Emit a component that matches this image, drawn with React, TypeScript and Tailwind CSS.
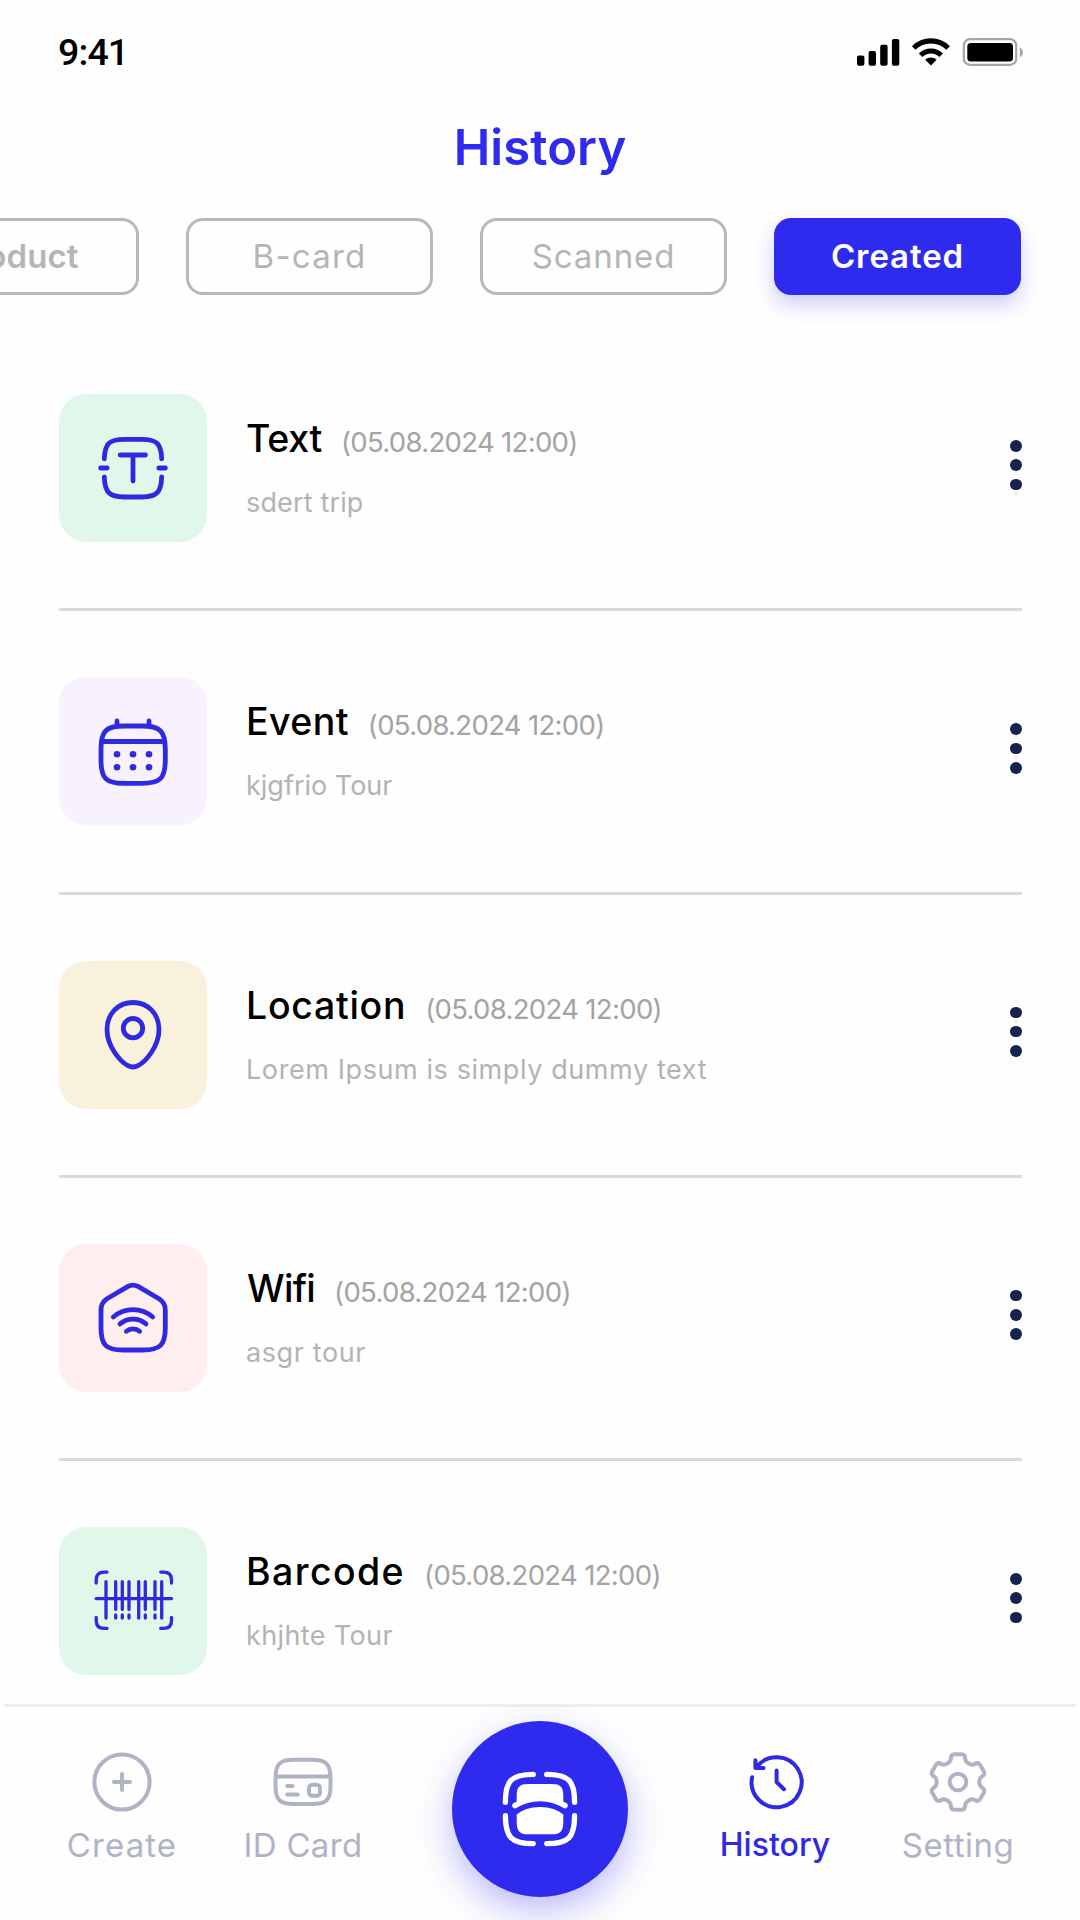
import type { ReactNode } from "react";

type HistoryEntry = {
  title: string;
  tracking: string;
  indent: string;
  note: string;
  noteTracking: string;
  tile: string;
  icon: ReactNode;
};

const DATE = "(05.08.2024 12:00)";

function TileIcon({ children, stroke = 4.8 }: { children: ReactNode; stroke?: number }) {
  return (
    <svg
      viewBox="0 0 80 80"
      className="size-20 overflow-visible text-[#3029E2]"
      fill="none"
      stroke="currentColor"
      strokeWidth={stroke}
      strokeLinecap="round"
      strokeLinejoin="round"
    >
      {children}
    </svg>
  );
}

const TextIcon = (
  <TileIcon>
    <path d="M11.3 30.8C11.8 15.5 16.5 11.3 31 11.3H49C63.5 11.3 68.2 15.5 68.7 30.8" />
    <path d="M11.3 48.9C11.8 64.5 16.5 69 31 69H49C63.5 69 68.2 64.5 68.7 48.9" />
    <path d="M7.6 40H14.2M65.8 40H72.4M27.2 27H52.5M40 27V53" />
  </TileIcon>
);

const EventIcon = (
  <TileIcon>
    <path d="M8 38C8 20 13 15 31 15H49C67 15 72.3 20 72.3 38V49C72.3 67.5 67 72.4 49 72.4H31C13 72.4 8 67.5 8 49Z" />
    <path d="M9 30.5H71M24 10V15M56 10V15" />
    <g fill="currentColor" stroke="none">
      {[43.3, 56.3].map((y) => [24, 40, 56].map((x) => <circle key={`${x}-${y}`} cx={x} cy={y} r="3.3" />))}
    </g>
  </TileIcon>
);

const LocationIcon = (
  <TileIcon>
    <path d="M40 7.5C25 7.5 14 19 14 34.5C14 51 27 66.5 35 70.7C38.5 72.5 41.5 72.5 45 70.7C53 66.5 66 51 66 34.5C66 19 55 7.5 40 7.5Z" />
    <circle cx="40" cy="33.2" r="9.7" />
  </TileIcon>
);

const WifiIcon = (
  <TileIcon>
    <path d="M35 8.4C38.5 6.6 41.5 6.6 45 8.4L66 20.7C70.5 23.5 72.3 26.5 72.3 32V50C72.3 67 67 72 50 72H30C13 72 8 67 8 50V32C8 26.5 9.5 23.5 14 20.7Z" />
    <path d="M20.3 39A30 30 0 0 1 59.7 39M27 45.9A20 20 0 0 1 53 45.9M33.4 53.3A10 10 0 0 1 46.6 53.3" />
  </TileIcon>
);

const BarcodeIcon = (
  <TileIcon stroke={3.3}>
    <path d="M3.2 22V19C3.2 14 6 11.1 11 11.1H14M67.7 11.1H70.7C75.7 11.1 78.5 14 78.5 19V22M3.2 56.5V59.5C3.2 64.5 6 67.4 11 67.4H14M67.7 67.4H70.7C75.7 67.4 78.5 64.5 78.5 59.5V56.5" />
    <path d="M3.2 37.6H78.5" />
    <path d="M13 20.7V57M45.7 20.7V57M68.7 20.7V57" />
    <path d="M22.7 20.7V48.4M29.3 20.7V48.4M36 20.7V48.4M52.3 20.7V48.4M62 20.7V48.4" />
    <path d="M22.7 54V57M29.3 54V57M36 54V57M52.3 54V57M62 54V57" />
  </TileIcon>
);

const entries: HistoryEntry[] = [
  { title: "Text", tracking: "tracking-[-0.3px]", indent: "", note: "sdert trip", noteTracking: "tracking-[0.15px]", tile: "bg-[#E1F7EA]", icon: TextIcon },
  { title: "Event", tracking: "tracking-[0.4px]", indent: "", note: "kjgfrio Tour", noteTracking: "tracking-[0px]", tile: "bg-[#F7F2FE]", icon: EventIcon },
  { title: "Location", tracking: "tracking-[0.7px]", indent: "", note: "Lorem Ipsum is simply dummy text", noteTracking: "tracking-[0.59px]", tile: "bg-[#F8F2DC]", icon: LocationIcon },
  { title: "Wifi", tracking: "tracking-[-0.7px]", indent: "ml-px", note: "asgr tour", noteTracking: "tracking-[0.6px]", tile: "bg-[#FEEEEE]", icon: WifiIcon },
  { title: "Barcode", tracking: "tracking-[1.4px]", indent: "", note: "khjhte Tour", noteTracking: "tracking-[0.38px]", tile: "bg-[#E1F7EA]", icon: BarcodeIcon },
];

function StatusBar() {
  return (
    <header className="flex h-[104px] shrink-0 items-center justify-between pr-[56px] pl-[58px]">
      <span className="font-[Roboto] text-[37.5px] font-medium tracking-[-0.9px] text-black">9:41</span>
      <svg viewBox="857 38 167 28" className="h-[28px] w-[167px]" fill="none">
        <g fill="#000">
          <rect x="857" y="55.5" width="7.4" height="10.2" rx="2" />
          <rect x="868.6" y="51" width="7.4" height="14.7" rx="2" />
          <rect x="880.2" y="44.8" width="7.4" height="20.9" rx="2" />
          <rect x="891.9" y="39" width="7.4" height="26.7" rx="2" />
          <path d="M930.9 65.5L925.2 59.8C928.3 56.6 933.5 56.6 936.6 59.8Z" />
          <rect x="967.3" y="43" width="45.7" height="18.6" rx="3.6" />
        </g>
        <path d="M913.7 48C923.3 38.5 938.5 38.5 948.1 48" stroke="#000" strokeWidth="5.2" />
        <path d="M920.6 55.2C926.4 49.5 935.4 49.5 941.2 55.2" stroke="#000" strokeWidth="5" />
        <rect x="963.8" y="39.1" width="52.4" height="25.8" rx="6.2" stroke="#A6A6A6" strokeWidth="2.2" />
        <path d="M1019.8 47.5C1024 49.5 1024 55.3 1019.8 57.3Z" fill="#A6A6A6" />
      </svg>
    </header>
  );
}

function Tabs() {
  const base = "flex h-[77px] w-[247px] shrink-0 items-center justify-center rounded-[17px] text-[33px]";
  const outline = "border-3 border-[#B8B8B8] text-[#B5B5B5]";
  return (
    <nav className="mt-[26px] flex shrink-0 justify-end gap-[47px] pr-[59px]">
      <button className={`${base} ${outline} font-semibold tracking-[0.1px]`}>Product</button>
      <button className={`${base} ${outline} font-normal tracking-[1.2px]`}>B-card</button>
      <button className={`${base} ${outline} font-normal tracking-[0.9px]`}>Scanned</button>
      <button className={`${base} bg-[#2E2BEE] font-semibold tracking-[0.9px] text-white shadow-[0_10px_20px_rgba(46,43,238,0.22)]`}>
        Created
      </button>
    </nav>
  );
}

function HistoryRow({ entry }: { entry: HistoryEntry }) {
  return (
    <li className="flex h-[283.25px] shrink-0 items-start border-b-3 border-[#DADADA] pt-[66px] last:border-b-0">
      <div className={`flex size-[148px] items-center justify-center rounded-[27px] ${entry.tile}`}>{entry.icon}</div>
      <div className="ml-[39px] flex-1 pt-[19px]">
        <div className="flex h-[52px] items-baseline gap-[19px]">
          <h2 className={`text-[37.5px] leading-[52px] font-medium text-black ${entry.tracking} ${entry.indent}`}>{entry.title}</h2>
          <span className="text-[27.5px] leading-10 tracking-[-0.67px] text-[#A3A3A3]">{DATE}</span>
        </div>
        <p className={`mt-[18px] text-[27px] leading-10 text-[#B3B3B3] ${entry.noteTracking}`}>{entry.note}</p>
      </div>
      <button className="mt-[46px] flex flex-col gap-[7.6px]" aria-label="More">
        <span className="size-[11.7px] rounded-full bg-[#17234D]" />
        <span className="size-[11.7px] rounded-full bg-[#17234D]" />
        <span className="size-[11.7px] rounded-full bg-[#17234D]" />
      </button>
    </li>
  );
}

// One tooth of the gear, pointing up from the centre; six rotations close the outline.
const tooth = [
  [-8.5, -19.7], [-7.2, -21.5], [-7.2, -23.5],
  [-7.2, -26.2], [-5.8, -27.7], [-3.5, -27.7],
  [-1, -27.7], [1, -27.7], [3.5, -27.7],
  [5.8, -27.7], [7.2, -26.2], [7.2, -23.5],
  [7.2, -21.5], [8.5, -19.7], [10.65, -18.45],
];

function gearPath() {
  let d = "M19.35 11.55";
  for (let k = 0; k < 6; k++) {
    const a = (k * Math.PI) / 3;
    d += "C" + tooth
      .map(([x, y]) => `${(30 + x * Math.cos(a) - y * Math.sin(a)).toFixed(2)} ${(30 + x * Math.sin(a) + y * Math.cos(a)).toFixed(2)}`)
      .join(" ");
  }
  return d + "Z";
}

function NavItem({ label, className, children }: { label: string; className: string; children: ReactNode }) {
  return (
    <a className={`mt-[45px] flex w-[150px] flex-col items-center ${className}`}>
      <svg viewBox="0 0 60 60" className="size-[60px]" fill="none" stroke="currentColor" strokeWidth="4" strokeLinecap="round" strokeLinejoin="round">
        {children}
      </svg>
      <span className="mt-[13px] leading-10 whitespace-nowrap">{label}</span>
    </a>
  );
}

function BottomNav() {
  return (
    <nav className="mx-1 flex h-[216px] shrink-0 items-start border-t-3 border-[#EEEEEE] pl-[43px]">
      <NavItem label="Create" className="text-[33px] tracking-[1.1px] text-[#B0B3C6]">
        <circle cx="30" cy="30" r="27.6" />
        <path d="M30 22V38M22 30H38" />
      </NavItem>
      <NavItem label="ID Card" className="ml-[31px] text-[33px] tracking-[0.3px] text-[#B0B3C6]">
        <path d="M2.5 26C2.5 12 7 7.7 21 7.7H39C53 7.7 57.5 12 57.5 26V34C57.5 48 53 52.1 39 52.1H21C7 52.1 2.5 48 2.5 34Z" />
        <path d="M3 24.4H57M14.2 34H19.5M14.2 42.4H24.8" />
        <rect x="36" y="32.7" width="11" height="11" rx="3.2" />
      </NavItem>
      <button className="mt-[14px] ml-[74px] flex size-[176px] items-center justify-center rounded-full bg-[#2E2BEE] shadow-[0_14px_36px_rgba(46,43,238,0.32)]" aria-label="Scan">
        <svg viewBox="0 0 80 80" className="size-20 text-white" fill="none" stroke="currentColor" strokeWidth="5.4" strokeLinecap="round">
          <path d="M5.4 33.2C5.4 11.5 11.5 5.4 33.2 5.4M46.8 5.4C68.5 5.4 74.6 11.5 74.6 33.2M74.6 46.8C74.6 68.5 68.5 74.6 46.8 74.6M33.2 74.6C11.5 74.6 5.4 68.5 5.4 46.8" />
          <path d="M14.9 36.6A47.5 47.5 0 0 1 65.1 36.6" />
          <g fill="currentColor" stroke="none">
            <path d="M16.7 35V27C16.7 18 19.5 15 28 15H52C60.5 15 63.3 18 63.3 27V35A47.5 47.5 0 0 0 16.7 35Z" />
            <path d="M16.7 45.5C22 41 30 38 40 38S58 41 63.3 45.5V53C63.3 62 60.5 65.3 52 65.3H28C19.5 65.3 16.7 62 16.7 53Z" />
          </g>
        </svg>
      </button>
      <NavItem label="History" className="ml-[72px] text-[32px] font-medium tracking-[0.05px] text-[#3029E2]">
        <path d="M7.1 25.3A25 25 0 1 0 11.5 15.4M10.4 8.2V15.9H18.6M31.6 18.6V30L39 37.2" />
      </NavItem>
      <NavItem label="Setting" className="ml-[33px] text-[33px] tracking-[0.5px] text-[#B0B3C6]">
        <path d={gearPath()} />
        <circle cx="30" cy="30" r="8.3" />
      </NavItem>
    </nav>
  );
}

export default function App() {
  return (
    <div className="flex h-[1920px] w-[1080px] flex-col overflow-hidden bg-[#FEFEFE] font-[Inter,sans-serif]">
      <StatusBar />
      <h1 className="h-[88px] shrink-0 text-center text-[49px] leading-[88px] font-semibold tracking-[0.1px] text-[#2E2BEE]">History</h1>
      <Tabs />
      <ul className="mt-[33px] flex min-h-0 flex-1 flex-col pr-[58.5px] pl-[59px]">
        {entries.map((entry) => (
          <HistoryRow key={entry.title} entry={entry} />
        ))}
      </ul>
      <BottomNav />
    </div>
  );
}
